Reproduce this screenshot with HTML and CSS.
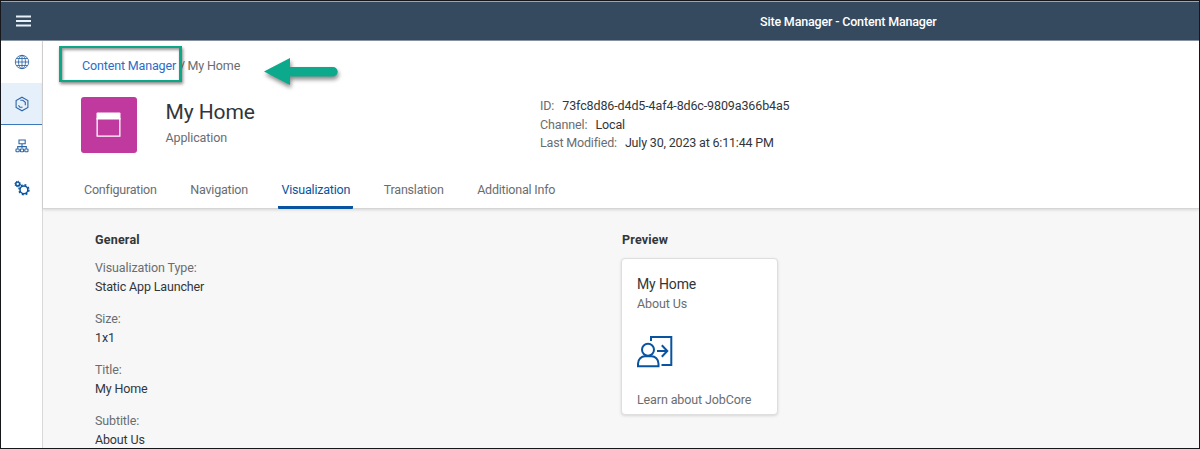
FILE: index.html
```html
<!DOCTYPE html>
<html lang="en">
<head>
<meta charset="utf-8">
<title>Site Manager - Content Manager</title>
<link rel="stylesheet" href="styles.css">
</head>
<body>
<div class="app">
  <header class="shell">
    <svg class="menu" width="16" height="12" viewBox="0 0 16 12"><path d="M0 1.5h15M0 6h15M0 10.5h15"/></svg>
    <h1 class="shell-title">Site Manager - Content Manager</h1>
  </header>
  <div class="body">
    <nav class="side">
      <a class="side-item"><svg class="globe" width="16" height="16" viewBox="0 0 16 16"><circle cx="8" cy="8" r="6.7"/><ellipse cx="8" cy="8" rx="3.5" ry="6.7"/><path d="M8 1.3v13.4M1.3 8h13.4M2.5 4.5h11M2.5 11.5h11"/></svg></a>
      <a class="side-item selected"><svg width="16" height="16" viewBox="0 0 16 16"><path d="M8 1.2l5.9 3.3v7L8 14.800l-5.900-3.300v-7zM6.300 4.300h2.500l2.500 2v3M4.500 9.300l1.500 2h2.500"/></svg></a>
      <a class="side-item"><svg width="16" height="16" viewBox="0 0 16 16"><path d="M5 2h6.200v3.800H5zM8 5.800v4.500M3.700 10.800V8.600h8.600v2.200"/><rect x="2" y="11" width="3.200" height="2.800" rx=".6"/><rect x="6.400" y="11" width="3.200" height="2.800" rx=".6"/><rect x="10.800" y="11" width="3.200" height="2.800" rx=".6"/></svg></a>
      <a class="side-item"><svg class="gears" width="16" height="16" viewBox="0 0 16 16"><circle cx="3.700" cy="4" r="1.900"/><circle class="teeth small" cx="3.700" cy="4" r="2.800"/><circle cx="9.900" cy="9.800" r="3.900"/><circle class="teeth" cx="9.900" cy="9.800" r="5"/></svg></a>
    </nav>
    <main class="content">
      <section class="head">
        <div class="crumbs"><a class="link">Content Manager</a><span class="slash">/</span><span class="current">My Home</span></div>
        <div class="identity">
          <div class="avatar"><svg width="26" height="26" viewBox="0 0 26 26"><path class="fill" d="M1.500 .500h22q1 0 1 1v6H.500v-6q0-1 1-1z"/><path class="line" d="M1.150 6v18.200h22.700V6"/></svg></div>
          <div class="names"><h2 class="name">My Home</h2><div class="kind">Application</div></div>
          <dl class="facts">
            <div class="fact"><dt>ID:</dt><dd>73fc8d86-d4d5-4af4-8d6c-9809a366b4a5</dd></div>
            <div class="fact"><dt>Channel:</dt><dd>Local</dd></div>
            <div class="fact modified"><dt>Last Modified:</dt><dd>July 30, 2023 at 6:11:44 PM</dd></div>
          </dl>
        </div>
        <div class="tabs"><a class="tab">Configuration</a><a class="tab">Navigation</a><a class="tab active">Visualization</a><a class="tab">Translation</a><a class="tab">Additional Info</a></div>
      </section>
      <section class="details">
        <div class="general">
          <h3 class="heading">General</h3>
          <dl class="fields">
            <div class="field"><dt>Visualization Type:</dt><dd>Static App Launcher</dd></div>
            <div class="field"><dt>Size:</dt><dd>1x1</dd></div>
            <div class="field"><dt>Title:</dt><dd>My Home</dd></div>
            <div class="field"><dt>Subtitle:</dt><dd>About Us</dd></div>
          </dl>
        </div>
        <div class="preview">
          <h3 class="heading">Preview</h3>
          <article class="tile">
            <div class="tile-title">My Home</div>
            <div class="tile-sub">About Us</div>
            <svg class="tile-icon" width="36" height="32" viewBox="0 0 36 32"><path d="M14 5V1h20.300v28H24.500M20 15h10M24.800 9.300l5.500 5.700-5.500 5.700"/><circle cx="11" cy="13.800" r="6"/><path d="M1 30.300v-2.500c0-5 3.500-7.500 7-7.500h6.500c3.500 0 7 2.500 7 7.500v2.500z"/></svg>
            <div class="tile-foot">Learn about JobCore</div>
          </article>
        </div>
      </section>
    </main>
  </div>
  <div class="highlight"></div>
  <svg class="arrow" width="82" height="36" viewBox="0 0 82 36"><path d="M4 15.500L30 2v9h43a4.700 4.700 0 0 1 0 9.400H30V29z"/></svg>
</div>
</body>
</html>
```
FILE: styles.css
```css
* { box-sizing: border-box; }
body { margin: 0; font: 12.5px/18px Roboto, "Liberation Sans", sans-serif; letter-spacing: -.12px; color: #32363a; }
h1, h2, h3, dl, dt, dd { margin: 0; font: inherit; }
svg { display: block; fill: none; flex: none; }
.app { position: relative; width: 1200px; height: 449px; border: 1px solid #15171a; overflow: hidden; display: flex; flex-direction: column; background: #fff; }
.shell { height: 40px; flex: none; display: flex; align-items: center; padding-left: 15px; background: #354a5f; border-top: 1px solid #a0a6ae; border-bottom: 1px solid #8995a3; }
.menu { stroke: #e8f0fa; stroke-width: 1.8; }
.shell-title { margin: 1px 0 0 728px; color: #fff; font-weight: 500; letter-spacing: -.17px; white-space: nowrap; }
.body { display: flex; flex: 1; min-height: 0; }
.side { width: 42px; flex: none; border-right: 1px solid #d9d9d9; }
.side-item { display: flex; height: 42px; align-items: center; justify-content: center; }
.side-item svg { stroke: #2d65a5; stroke-width: 1.1; }
.side-item .globe { stroke-width: .85; }
.selected { background: #e5f0fa; border-bottom: 1px solid #3a78b8; }
.side-item .gears { stroke: #0854a0; stroke-width: 1.5; overflow: visible; }
.gears .teeth { stroke-width: 1.5; stroke-dasharray: 1.96 1.967; }
.gears .small { stroke-width: 1; stroke-dasharray: 1.1 1.1; }
.content { flex: 1; min-width: 0; display: flex; flex-direction: column; }
.head { height: 168px; flex: none; background: #fff; border-bottom: 1px solid #d5d5d5; box-shadow: 0 1px 3px #0002; z-index: 1; padding: 16px 0 0 38px; }
.crumbs { display: flex; height: 18px; padding-left: 1px; color: #6a6d70; white-space: nowrap; }
.link { color: #2a6cc8; width: 98px; letter-spacing: -.15px; }
.slash { width: 7.5px; }
.identity { display: flex; margin-top: 22px; height: 56px; }
.avatar { width: 56px; height: 56px; background: #c0399f; border-radius: 3px; display: flex; align-items: center; justify-content: center; }
.avatar .fill { fill: #fff; }
.avatar .line { stroke: #fff; stroke-width: 1.3; }
.names { width: 403px; padding: 2px 0 0 28.5px; }
.name { font-size: 21px; line-height: 27px; letter-spacing: -.1px; }
.kind { margin-top: 3px; color: #6a6d70; }
.facts { width: 300px; }
.fact { display: flex; height: 18.5px; gap: 8px; white-space: nowrap; }
.modified { letter-spacing: -.18px; }
.fact dt, .field dt { color: #6a6d70; }
.tabs { display: flex; gap: 27.6px; margin-top: 18px; height: 38px; color: #6a6d70; letter-spacing: -.21px; }
.tab { height: 38px; padding: 10px 3px 0; white-space: nowrap; }
.active { color: #0854a0; border-bottom: 3px solid #0854a0; border-radius: 1px; }
.details { display: flex; flex: 1; min-height: 0; background: #f7f7f7; padding: 22px 0 0 52px; }
.general { width: 527px; }
.heading { font-weight: 700; letter-spacing: .2px; }
.fields { margin-top: 10px; }
.field { height: 51px; line-height: 18.5px; }
.field dd { letter-spacing: -.15px; }
.tile { width: 157px; height: 157px; margin: 9px 0 0 -1px; padding: 16px 15px 0; background: #fff; border: 1px solid #dedede; border-radius: 4px; box-shadow: 0 1px 3px #0002; color: #6a6d70; }
.tile-title { color: #32363a; font-size: 14px; line-height: 19px; }
.tile-sub { margin-top: 1px; }
.tile-icon { margin-top: 23px; stroke: #0854a0; stroke-width: 2; }
.tile-foot { margin-top: 23px; white-space: nowrap; }
.highlight { position: absolute; z-index: 2; left: 58px; top: 45px; width: 123px; height: 36px; border: 3px solid #0ca886; border-width: 2.5px 3px; box-shadow: 1px 2px 3px #0007, inset 1px 2px 3px #0006; }
.arrow { position: absolute; z-index: 2; left: 259px; top: 55px; fill: #0ca98c; filter: drop-shadow(1px 3px 2px #0007); }
```
